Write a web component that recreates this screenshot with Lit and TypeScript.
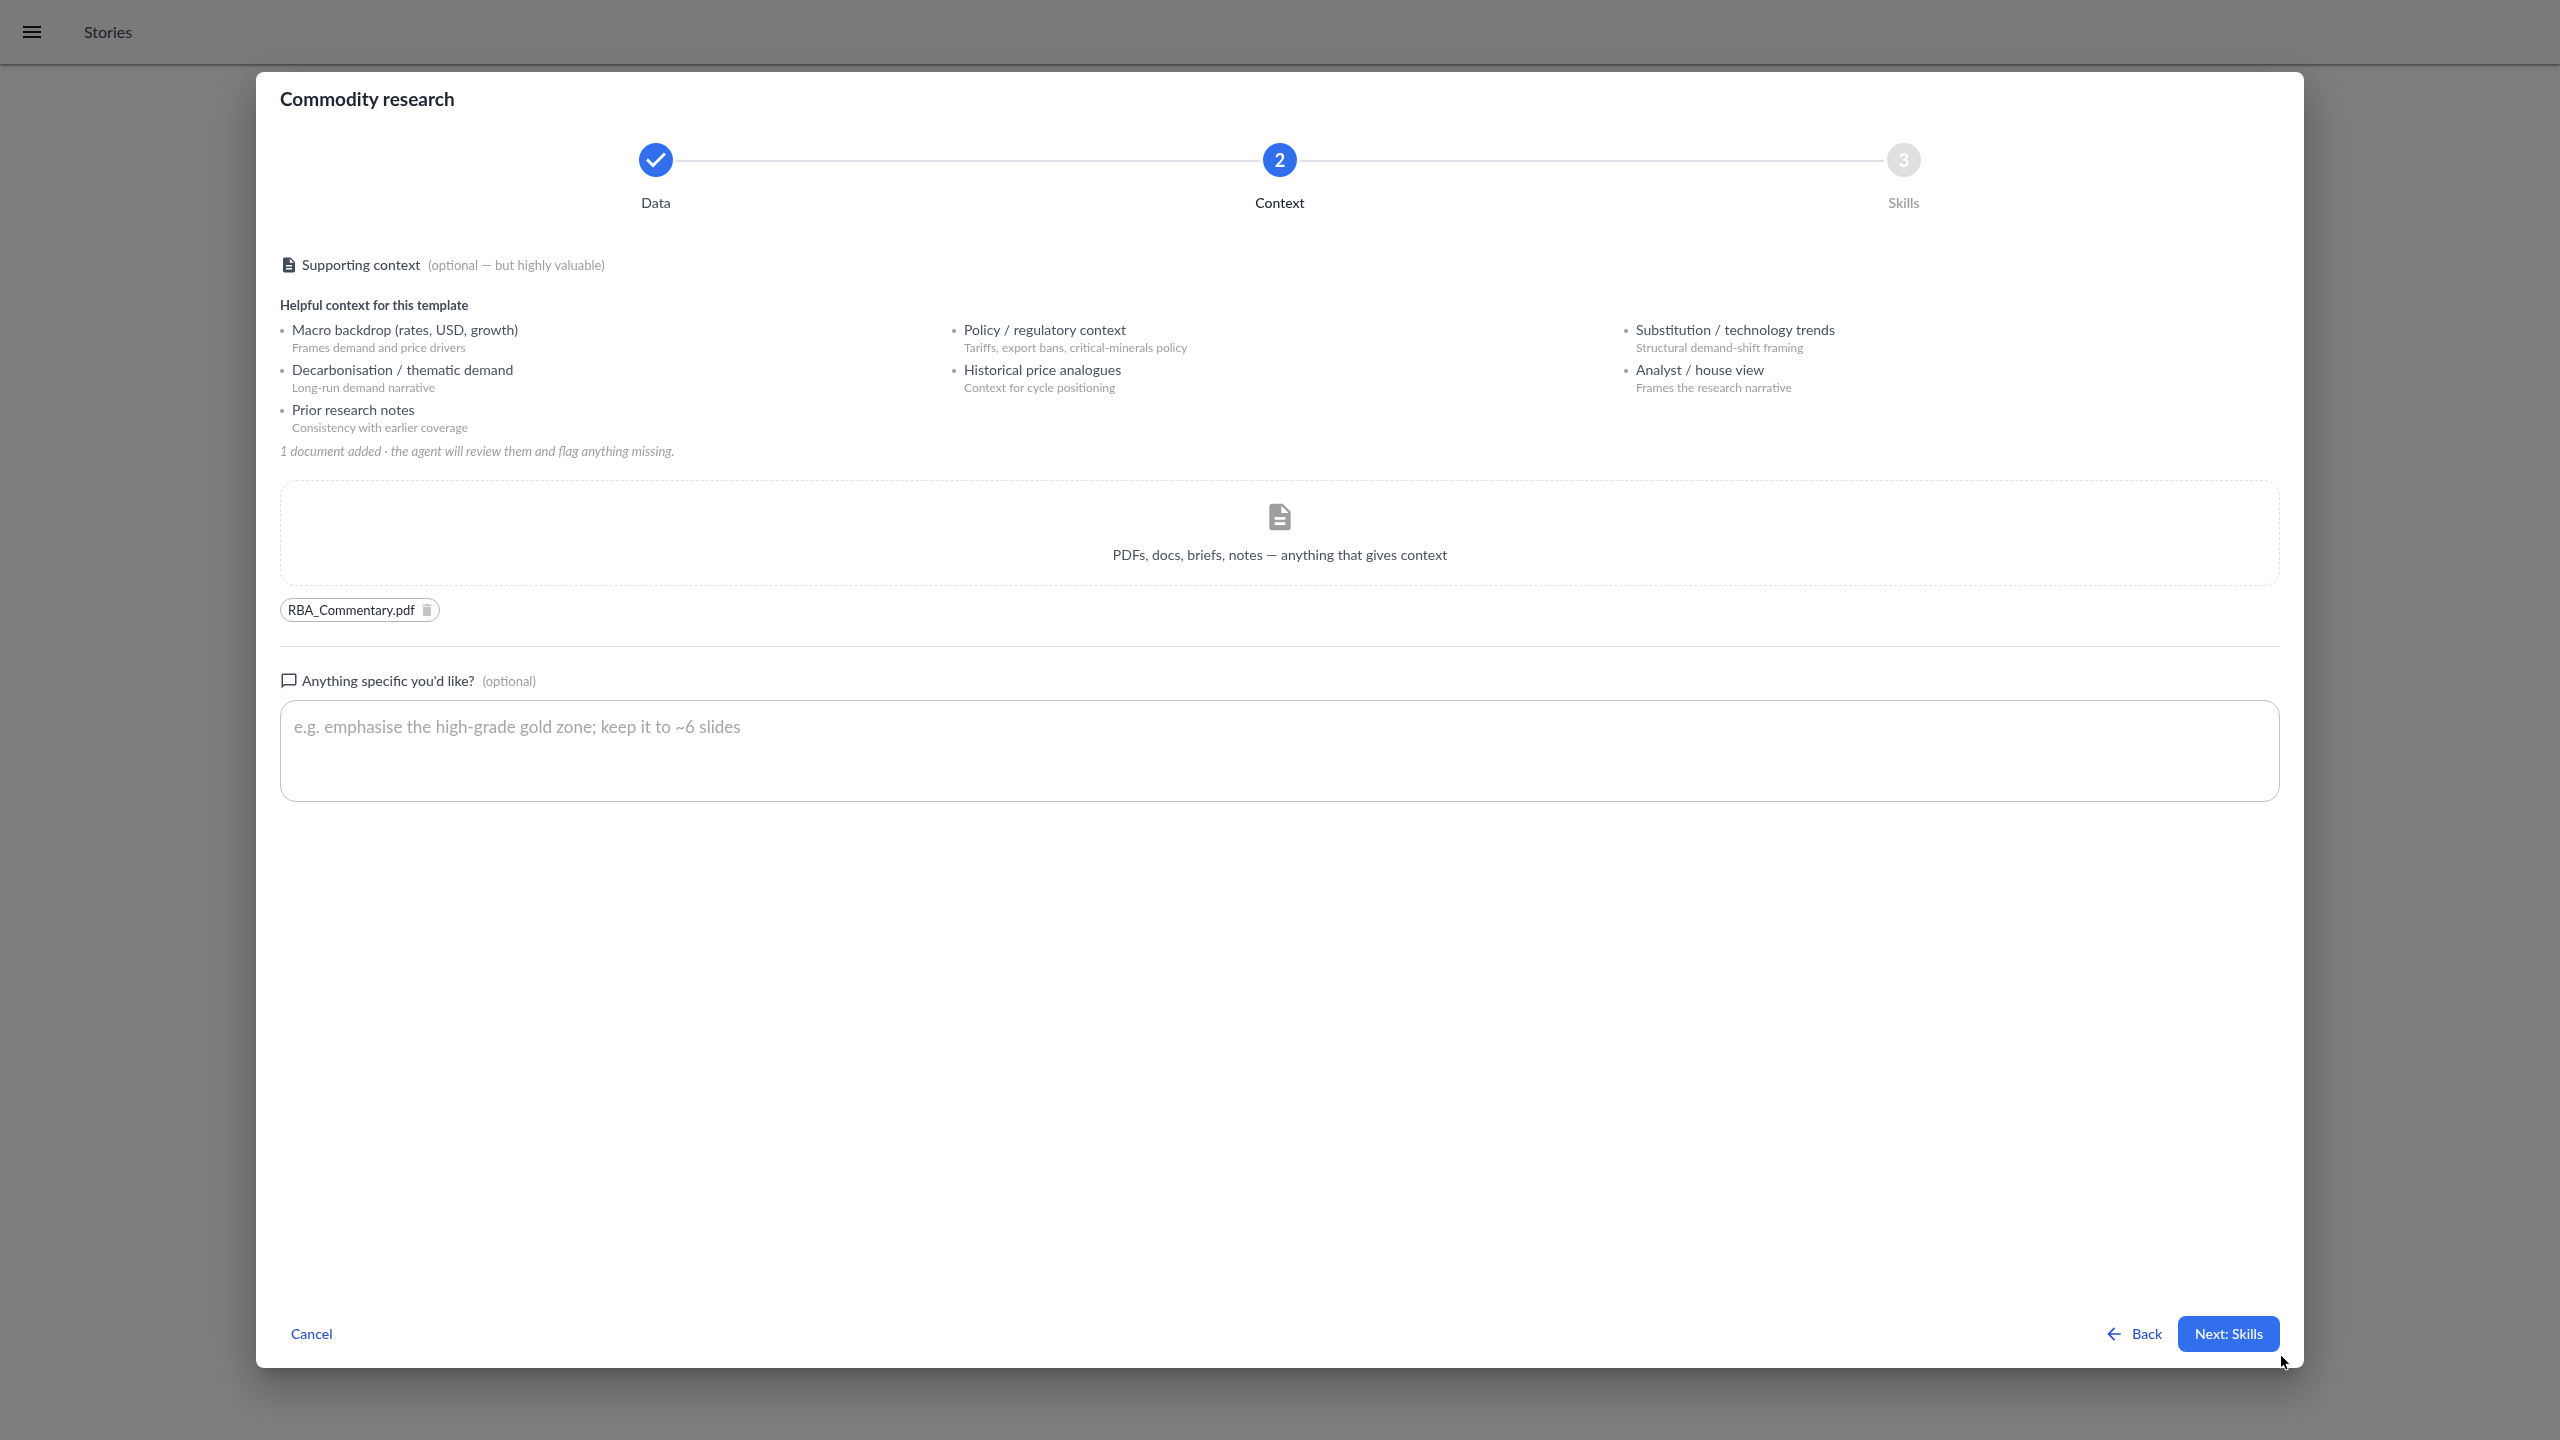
import { LitElement, html, svg, css, nothing } from "lit";
import { customElement, state } from "lit/decorators.js";

interface Hint {
  title: string;
  detail: string;
}

const HINTS: Hint[] = [
  { title: "Macro backdrop (rates, USD, growth)", detail: "Frames demand and price drivers" },
  { title: "Policy / regulatory context", detail: "Tariffs, export bans, critical-minerals policy" },
  { title: "Substitution / technology trends", detail: "Structural demand-shift framing" },
  { title: "Decarbonisation / thematic demand", detail: "Long-run demand narrative" },
  { title: "Historical price analogues", detail: "Context for cycle positioning" },
  { title: "Analyst / house view", detail: "Frames the research narrative" },
  { title: "Prior research notes", detail: "Consistency with earlier coverage" },
];

const STEPS = ["Data", "Context", "Skills"];

const DOC = svg`<path d="M14 2H6c-1.1 0-2 .9-2 2v16c0 1.1.9 2 2 2h12c1.1 0 2-.9 2-2V8l-6-6zm2 16H8v-2h8v2zm0-4H8v-2h8v2zm-3-5V3.5L18.5 9H13z"/>`;
const CHAT = svg`<path d="M20 2H4c-1.1 0-2 .9-2 2v18l4-4h14c1.1 0 2-.9 2-2V4c0-1.1-.9-2-2-2zm0 14H5.2L4 17.2V4h16v12z"/>`;
const TRASH = svg`<path d="M6 19c0 1.1.9 2 2 2h8c1.1 0 2-.9 2-2V7H6v12zM19 4h-3.5l-1-1h-5l-1 1H5v2h14V4z"/>`;
const ARROW = svg`<path d="M20 11H7.83l5.59-5.59L12 4l-8 8 8 8 1.41-1.41L7.83 13H20v-2z"/>`;
const MENU = svg`<path d="M3 18h18v-2H3v2zm0-5h18v-2H3v2zm0-7v2h18V6H3z"/>`;

@customElement("app-root")
export class AppRoot extends LitElement {
  @state() private current = 1;
  @state() private files = ["RBA_Commentary.pdf"];

  static styles = css`
    :host {
      display: block;
      min-height: 100vh;
      background: #fafafa;
      color: #4a5163;
      font-family: Lato, "Open Sans", sans-serif;
      font-size: 14px;
      line-height: 20px;
    }
    * {
      box-sizing: border-box;
    }
    button {
      font: inherit;
      border: 0;
      background: none;
      cursor: pointer;
    }
    h1, h2, h3, p, ul, ol {
      margin: 0;
      padding: 0;
      font-size: inherit;
      font-weight: 400;
    }
    ul, ol {
      list-style: none;
    }
    svg {
      display: block;
      flex: none;
      fill: currentColor;
    }
    .bar {
      display: flex;
      align-items: center;
      gap: 40px;
      height: 64px;
      padding: 0 20px;
      background: #f5f5f5;
      box-shadow: 0 1px 3px rgba(0, 0, 0, 0.6);
    }
    .menu {
      display: flex;
      padding: 0;
      color: #1a1a1a;
    }
    .bar-title {
      font-size: 16px;
      line-height: 24px;
      color: #3c4252;
    }
    .backdrop {
      position: fixed;
      inset: 0;
      display: flex;
      align-items: center;
      justify-content: center;
      background: rgba(0, 0, 0, 0.5);
    }
    .dialog {
      display: flex;
      flex-direction: column;
      width: 80%;
      height: 90%;
      padding: 15px 24px 16px;
      border-radius: 8px;
      background: #fff;
      box-shadow: 0 11px 15px -7px rgba(0, 0, 0, 0.2),
        0 24px 38px 3px rgba(0, 0, 0, 0.14),
        0 9px 46px 8px rgba(0, 0, 0, 0.12);
    }
    .title {
      font-size: 19px;
      line-height: 24px;
      font-weight: 700;
      color: #1f2433;
    }
    .steps {
      display: grid;
      grid-template-columns: repeat(3, 1fr);
      margin-top: 32px;
      padding: 0 64px;
    }
    .step {
      display: grid;
      grid-template-columns: 1fr 34px 1fr;
      align-items: center;
      column-gap: 3px;
      row-gap: 16px;
    }
    .line {
      height: 2px;
      margin-top: 2px;
      background: #e0e1e6;
    }
    .step:first-child .before,
    .step:last-child .after {
      background: none;
    }
    .dot {
      display: flex;
      align-items: center;
      justify-content: center;
      height: 34px;
      border-radius: 50%;
      background: #326fed;
      color: #fff;
      font-size: 18px;
      font-weight: 700;
    }
    .dot.todo {
      background: #e0e0e0;
    }
    .check {
      fill: none;
      stroke: currentColor;
      stroke-width: 3;
    }
    .step-name {
      grid-column: 1 / -1;
      text-align: center;
      font-weight: 500;
    }
    .step-name.now {
      color: #1f2433;
    }
    .step-name.todo {
      color: #9e9e9e;
      font-weight: 600;
    }
    .body {
      flex: 1;
      padding-top: 42px;
    }
    .heading {
      display: flex;
      align-items: center;
      gap: 4px;
      color: #434a5a;
      font-weight: 500;
    }
    .optional {
      margin-left: 4px;
      font-size: 13px;
      font-weight: 400;
      color: #9e9e9e;
    }
    .subheading {
      margin-top: 20px;
      font-size: 13px;
      font-weight: 700;
      color: #434a5a;
    }
    .hints {
      display: grid;
      grid-template-columns: repeat(3, 1fr);
      gap: 4px 16px;
      margin-top: 5px;
    }
    .hint {
      display: flex;
      gap: 8px;
    }
    .bullet {
      flex: none;
      width: 4px;
      height: 4px;
      margin-top: 9px;
      border-radius: 50%;
      background: #9e9e9e;
    }
    .detail {
      font-size: 12px;
      line-height: 16px;
      color: #9e9e9e;
    }
    .note {
      margin-top: 5px;
      font-size: 13px;
      font-style: italic;
      color: #9e9e9e;
    }
    .drop {
      display: flex;
      flex-direction: column;
      align-items: center;
      gap: 12px;
      width: 100%;
      margin-top: 19px;
      padding: 20px;
      border: 1px dashed #e0e1e6;
      border-radius: 16px;
      color: inherit;
    }
    .drop svg {
      color: #9e9e9e;
    }
    .chips {
      display: flex;
      gap: 8px;
      margin-top: 12px;
    }
    .chip {
      display: flex;
      align-items: center;
      gap: 4px;
      height: 24px;
      padding: 0 4px 0 7px;
      border: 1px solid #b4b5b9;
      border-radius: 12px;
      font-size: 13px;
      color: #1f2433;
    }
    .remove {
      display: flex;
      padding: 0;
      color: #c2c3c8;
    }
    .rule {
      height: 1px;
      margin: 24px 0;
      border: 0;
      background: #e0e1e6;
    }
    .request {
      display: block;
      width: 100%;
      height: 102px;
      margin-top: 9px;
      padding: 14px 13px;
      border: 1px solid #c2c3c8;
      border-radius: 16px;
      background: #fff;
      color: #1f2433;
      font: inherit;
      font-size: 17px;
      line-height: 24px;
      resize: none;
    }
    .request::placeholder {
      color: #a5a6ab;
      opacity: 1;
    }
    .actions {
      display: flex;
      gap: 8px;
    }
    .action {
      display: flex;
      align-items: center;
      gap: 8px;
      height: 36px;
      padding: 0 8px;
      border-radius: 8px;
      color: #2a52c6;
      font-weight: 500;
    }
    .cancel {
      margin-right: auto;
      padding: 0 11px;
    }
    .next {
      padding: 0 17px;
      background: #326fed;
      color: #fff;
    }
    .pointer {
      position: fixed;
      left: calc(90% - 25px);
      top: calc(95% - 15px);
      fill: #000;
      stroke: #fff;
      pointer-events: none;
    }
  `;

  private icon(shape: unknown, size: number) {
    return html`<svg width=${size} height=${size} viewBox="0 0 24 24" aria-hidden="true">${shape}</svg>`;
  }

  private renderStep(name: string, i: number) {
    const done = i < this.current;
    const status = done ? "done" : i === this.current ? "now" : "todo";
    return html`
      <li class="step" aria-current=${status === "now" ? "step" : nothing}>
        <span class="line before"></span>
        <span class="dot ${status}">
          ${done
            ? html`<svg class="check" width="20" height="16" viewBox="0 0 20 16" aria-hidden="true">
                <path d="M1 7.5 7 13.500 19 1.500" />
              </svg>`
            : i + 1}
        </span>
        <span class="line after"></span>
        <span class="step-name ${status}">${name}</span>
      </li>
    `;
  }

  render() {
    return html`
      <header class="bar">
        <button class="menu" aria-label="Menu">${this.icon(MENU, 24)}</button>
        <h1 class="bar-title">Stories</h1>
      </header>
      <div class="backdrop">
        <section class="dialog" role="dialog" aria-modal="true" aria-labelledby="title">
          <h2 class="title" id="title">Commodity research</h2>
          <ol class="steps">${STEPS.map((s, i) => this.renderStep(s, i))}</ol>
          <div class="body">
            <h3 class="heading">
              ${this.icon(DOC, 18)}<span>Supporting context</span>
              <span class="optional">(optional — but highly valuable)</span>
            </h3>
            <p class="subheading">Helpful context for this template</p>
            <ul class="hints">
              ${HINTS.map(
                (h) => html`<li class="hint">
                  <span class="bullet"></span>
                  <div>
                    <p>${h.title}</p>
                    <p class="detail">${h.detail}</p>
                  </div>
                </li>`
              )}
            </ul>
            <p class="note">1 document added · the agent will review them and flag anything missing.</p>
            <button class="drop">
              ${this.icon(DOC, 32)}
              <span>PDFs, docs, briefs, notes — anything that gives context</span>
            </button>
            <div class="chips">
              ${this.files.map(
                (f) => html`<span class="chip">
                  ${f}
                  <button
                    class="remove"
                    aria-label="Remove file"
                    @click=${() => (this.files = this.files.filter((x) => x !== f))}
                  >
                    ${this.icon(TRASH, 16)}
                  </button>
                </span>`
              )}
            </div>
            <hr class="rule" />
            <label class="heading" for="request">
              ${this.icon(CHAT, 18)}<span>Anything specific you'd like?</span>
              <span class="optional">(optional)</span>
            </label>
            <textarea
              class="request"
              id="request"
              placeholder="e.g. emphasise the high-grade gold zone; keep it to ~6 slides"
            ></textarea>
          </div>
          <footer class="actions">
            <button class="action cancel">Cancel</button>
            <button class="action" @click=${() => (this.current = Math.max(0, this.current - 1))}>
              ${this.icon(ARROW, 20)}<span>Back</span>
            </button>
            <button class="action next" @click=${() => (this.current = Math.min(2, this.current + 1))}>
              Next: Skills
            </button>
          </footer>
        </section>
      </div>
      <svg class="pointer" width="14" height="20" viewBox="0 0 14 20" aria-hidden="true">
        <path d="M1.5 1.5v13.500l3-2.800 2.300 5 2.400-1-2.200-4.900h4.200z" />
      </svg>
    `;
  }
}
